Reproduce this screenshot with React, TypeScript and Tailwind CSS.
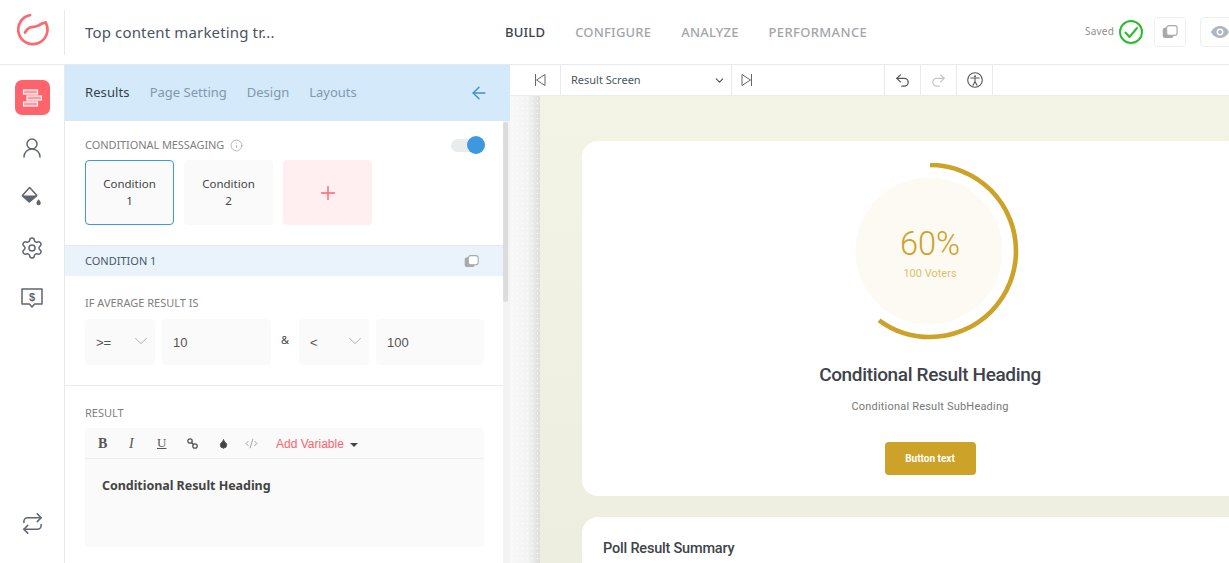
import React from 'react';
import { ChevronDown, Info, Plus, Repeat, Settings, UserRound, Undo2, Redo2, Droplet, CodeXml, ArrowLeft } from 'lucide-react';

const Logo = () => (
  <svg width="36" height="36" viewBox="0 0 36 36" fill="none" stroke="#fb6a70" strokeWidth="2.7" strokeLinecap="round" strokeLinejoin="round">
    <path d="M16 1.2A14.6 14.6 0 1 0 31.7 8.6" />
    <path d="M11 18.5c1.6-2.7 3.2-4.6 5.6-5.2 2.6-.6 4.6-.2 7-1.4 2.8-1.4 4.6-3.2 8.1-3.3" />
  </svg>
);

const ResultsIcon = () => (
  <svg width="20" height="20" viewBox="0 0 20 20" stroke="#fff" strokeWidth="1.2" fill="#ff9a9f">
    <rect x="1.5" y="2" width="14" height="4" />
    <rect x="5" y="8" width="14.5" height="4" />
    <rect x="1.5" y="14" width="14" height="4" />
  </svg>
);

const BucketIcon = () => (
  <svg width="22" height="22" viewBox="0 0 22 22" fill="none" stroke="#5f6670" strokeWidth="1.5" strokeLinejoin="round">
    <path d="M8.6 1.6 1.4 9.4l6.8 6.4 7.6-6.6z" />
    <path d="M2 10.2h13.2l-7 5.6z" fill="#5f6670" />
    <path d="M17.6 13.2c1.2 1.6 2.2 2.6 2.2 3.9a2.2 2.2 0 0 1-4.4 0c0-1.3 1-2.3 2.2-3.9z" fill="#5f6670" stroke="none" />
  </svg>
);

const PriceIcon = () => (
  <svg width="22" height="22" viewBox="0 0 22 22" fill="none" stroke="#5f6670" strokeWidth="1.5" strokeLinejoin="round">
    <path d="M1 2h20v15h-7.4L11 20l-2.6-3H1z" />
    <text x="11" y="14" textAnchor="middle" fontSize="11" fontWeight="700" fill="#5f6670" stroke="none" fontFamily="Liberation Sans, sans-serif">$</text>
  </svg>
);

const CopyIcon = ({ size = 16 }: { size?: number }) => (
  <svg width={size} height={size * 0.85} viewBox="0 0 16 14" fill="none">
    <rect x="0.5" y="2.5" width="11" height="11" rx="3" fill="#a9a9a9" />
    <rect x="4.5" y="0.7" width="10.8" height="10" rx="2.5" fill="#fff" stroke="#a9a9a9" strokeWidth="1.2" />
  </svg>
);

const SkipIcon = ({ flip }: { flip?: boolean }) => (
  <svg width="12" height="14" viewBox="0 0 12 14" fill="none" stroke="#666" strokeWidth="1" className={flip ? 'rotate-180' : ''}>
    <path d="M1.5 1v12M11 1.5v11L2.5 7z" />
  </svg>
);

const PersonCircle = () => (
  <svg width="16" height="16" viewBox="0 0 16 16" fill="none" stroke="#555" strokeWidth="1.1" strokeLinecap="round">
    <circle cx="8" cy="8" r="7.3" />
    <circle cx="8" cy="4.2" r="1" fill="#555" stroke="none" />
    <path d="M3.8 6h8.4M8 6v3.6M8 9.6l-2 3.6M8 9.6l2 3.6" />
  </svg>
);

const ChainIcon = () => (
  <svg width="11" height="11" viewBox="0 0 11 11" fill="none" stroke="#555" strokeWidth="1.3">
    <circle cx="3" cy="3" r="2.2" />
    <circle cx="8" cy="8" r="2.2" />
    <path d="M4 4l3 3" />
  </svg>
);

const SavedCheck = () => (
  <svg width="24" height="24" viewBox="0 0 24 24" fill="none" stroke="#2dbb2d" strokeLinecap="round" strokeLinejoin="round">
    <circle cx="12" cy="12" r="11" strokeWidth="2" />
    <path d="M6.5 12.5l4 4.5 7.5-9" strokeWidth="2" />
  </svg>
);

const EyeIcon = () => (
  <svg width="18" height="12" viewBox="0 0 18 12">
    <path d="M9 0C5 0 1.8 2.5 0 6c1.8 3.5 5 6 9 6s7.2-2.5 9-6c-1.8-3.5-5-6-9-6z" fill="#aeb7c0" />
    <circle cx="9" cy="6" r="3.4" fill="#fff" />
    <circle cx="9" cy="6" r="2" fill="#aeb7c0" />
  </svg>
);

const Field = ({ w, value, select }: { w: string; value: string; select?: boolean }) => (
  <div className={`${w} shrink-0 h-[46px] rounded bg-[#fafafa] flex items-center justify-between px-[11px] text-[13px] text-[#555] font-['Liberation_Sans',sans-serif]`}>
    <span className="mt-[1px]">{value}</span>
    {select && <ChevronDown size={22} strokeWidth={1} className="text-[#aaa] -mt-[3px] -mr-[8px]" />}
  </div>
);

const App: React.FC = () => {
  return (
    <div className="h-screen w-full overflow-hidden flex flex-col bg-white font-['Noto_Sans',sans-serif] text-[#444]">
      {/* top bar */}
      <header className="h-[65px] shrink-0 flex items-center border-b border-[#e6e9ee] relative">
        <div className="w-[65px] h-[45px] shrink-0 flex items-center border-r border-[#e6e9ee] pl-[14px]">
          <Logo />
        </div>
        <div className="w-[440px] pl-5 text-[15px] tracking-[0.15px] text-[#4b5560]">Top content marketing tr...</div>
        <nav className="flex gap-[30px] mt-[1px] text-[13px] font-medium tracking-[0.2px] text-[#a3a6a8]">
          <span className="text-[#39424e]">BUILD</span>
          <span>CONFIGURE</span>
          <span>ANALYZE</span>
          <span className="tracking-[0.35px]">PERFORMANCE</span>
        </nav>
        <div className="ml-auto flex items-center shrink-0 -mr-[29px]">
          <span className="text-[10px] text-[#8e8e8e] tracking-[0.2px] mr-[5px] -mt-[2px]">Saved</span>
          <SavedCheck />
          <div className="ml-[11px] w-[32px] h-[30px] border border-[#eceef1] rounded flex items-center justify-center">
            <CopyIcon />
          </div>
          <div className="ml-[14px] w-[58px] h-[30px] border border-[#eceef1] rounded flex items-center pl-[10px]">
            <EyeIcon />
          </div>
        </div>
      </header>

      <div className="flex-1 flex min-h-0">
        {/* icon rail */}
        <aside className="w-[65px] shrink-0 border-r border-[#e6e9ee] flex flex-col items-center pt-[15px] pb-[28px]">
          <div className="w-[35px] h-[35px] rounded-[7px] bg-[#ff636b] flex items-center justify-center">
            <ResultsIcon />
          </div>
          <UserRound size={24} strokeWidth={1.5} className="mt-[21px] text-[#5f6670]" />
          <div className="mt-[26px] h-[22px]"><BucketIcon /></div>
          <Settings size={24} strokeWidth={1.5} className="mt-[28px] text-[#5f6670]" />
          <div className="mt-[27px] h-[22px]"><PriceIcon /></div>
          <Repeat size={23} strokeWidth={1.6} className="mt-auto text-[#5f6670]" />
        </aside>

        {/* settings panel */}
        <section className="w-[445px] shrink-0 flex flex-col min-h-0">
          <div className="h-[56px] shrink-0 bg-[#d4e9f9] flex items-center pl-5 pr-[21px] gap-5 text-[13px] text-[#8199ad]">
            <span className="text-[#36424f] tracking-[0.1px]">Results</span>
            <span>Page Setting</span>
            <span>Design</span>
            <span>Layouts</span>
            <ArrowLeft size={20} strokeWidth={1.7} className="ml-auto text-[#3b8fdb]" />
          </div>
          <div className="flex-1 flex min-h-0">
            <div className="w-[438px] shrink-0">
              <div className="px-5 pt-4 h-[124px]">
                <div className="flex items-center h-4 text-[11px] tracking-[-0.08px] text-[#808080]">
                  <span>CONDITIONAL MESSAGING</span>
                  <Info size={13} strokeWidth={1} className="ml-[6px]" />
                  <div className="ml-auto w-[33px] h-[13px] rounded-full bg-[#e9ecef] relative mr-[-1px]">
                    <span className="absolute right-[-1px] top-[-3px] w-[18px] h-[18px] rounded-full bg-[#3d98e0]" />
                  </div>
                </div>
                <div className="flex gap-[10px] mt-[7px] text-[11.5px] leading-[17px] text-center">
                  <div className="w-[89px] h-[65px] rounded border border-[#3d98e0] bg-[#fafafa] flex items-center justify-center pb-[2px]"><span>Condition<br />1</span></div>
                  <div className="w-[89px] h-[65px] rounded bg-[#fafafa] flex items-center justify-center pb-[2px]"><span>Condition<br />2</span></div>
                  <div className="w-[89px] h-[65px] rounded bg-[#ffeff0] flex items-center justify-center">
                    <Plus size={22} strokeWidth={1.5} className="text-[#ff636b]" />
                  </div>
                </div>
              </div>
              <div className="h-[31px] bg-[#eaf3fb] border-t border-[#e3e9ee] flex items-center pl-5 pr-[24px] justify-between text-[11px] text-[#45596b]">
                <span>CONDITION 1</span>
                <CopyIcon size={15} />
              </div>
              <div className="h-[110px] border-b border-[#e8ebef] px-5 pt-[19px]">
                <div className="text-[11px] leading-[15px] text-[#808080]">IF AVERAGE RESULT IS</div>
                <div className="flex items-center gap-[7px] mt-[9px]">
                  <Field w="w-[70px]" value=">=" select />
                  <Field w="w-[109px]" value="10" />
                  <span className="w-[14px] shrink-0 text-center text-[11px] -mt-1">&amp;</span>
                  <Field w="w-[70px]" value="<" select />
                  <Field w="w-[108px]" value="100" />
                </div>
              </div>
              <div className="px-5 pt-[19px]">
                <div className="text-[11px] leading-[15px] text-[#808080]">RESULT</div>
                <div className="mt-[8px] w-[399px] bg-[#fafafa] rounded-sm">
                  <div className="h-[31px] flex items-center border-b border-[#ebedf0] pl-[13px] text-[#555]">
                    <span className="w-[30px] font-['Liberation_Serif',serif] font-bold text-[14px]">B</span>
                    <span className="w-[29px] font-['Liberation_Serif',serif] italic text-[14px] pl-[1px]">I</span>
                    <span className="w-[30px] font-['Liberation_Serif',serif] underline text-[13px]">U</span>
                    <span className="w-[31px]"><ChainIcon /></span>
                    <span className="w-[27px]"><Droplet size={11} fill="#444" /></span>
                    <span className="w-[31px]"><CodeXml size={13} strokeWidth={1.2} className="text-[#777]" /></span>
                    <span className="mt-[1px] font-['Liberation_Sans',sans-serif] text-[12px] text-[#ff636b]">Add Variable</span>
                    <span className="ml-[6px] mt-[3px] border-x-[4px] border-t-[4px] border-x-transparent border-t-[#444]" />
                  </div>
                  <div className="h-[88px] pl-[17px] pt-[18px] text-[12.5px] tracking-[-0.05px] leading-[18px] font-bold text-[#444]">Conditional Result Heading</div>
                </div>
              </div>
            </div>
            {/* panel scrollbar */}
            <div className="w-[7px] bg-[#f3f3f3] pt-[1px]">
              <div className="w-[5px] h-[180px] bg-[#dcdcdc] rounded-sm" />
            </div>
          </div>
        </section>

        {/* preview */}
        <main className="flex-1 min-w-0 flex flex-col">
          <div className="h-[31px] shrink-0 border-b border-[#e8ebef] flex items-center text-[11px] text-[#4b5560]">
            <div className="w-[51px] h-full border-r border-[#e8ebef] flex items-center justify-end pr-[14px]"><SkipIcon /></div>
            <div className="w-[171px] h-full border-r border-[#e8ebef] flex items-center justify-between pl-[10px] pr-[5px]">
              <span>Result Screen</span>
              <ChevronDown size={13} />
            </div>
            <div className="w-[153px] h-full border-r border-[#e8ebef] flex items-center pl-[9px]"><SkipIcon flip /></div>
            <div className="w-[36px] h-full border-r border-[#e8ebef] flex items-center justify-center"><Undo2 size={17} strokeWidth={1.8} className="text-[#555]" /></div>
            <div className="w-[36px] h-full border-r border-[#e8ebef] flex items-center justify-center"><Redo2 size={17} strokeWidth={1.8} className="text-[#c4c4c4]" /></div>
            <div className="w-[36px] h-full border-r border-[#e8ebef] flex items-center justify-center"><PersonCircle /></div>
          </div>
          <div className="flex-1 min-h-0 flex overflow-hidden">
            <div className="w-[30px] shrink-0 bg-[radial-gradient(#ffffff_0.7px,transparent_0.8px),linear-gradient(to_right,#f8f8f8,#f3f3f3_60%,#dedede)] [background-size:5px_5px,100%_100%]" />
            <div className="flex-1 bg-gradient-to-b from-[#f3f3e6] to-[#eeeee0] pl-[42px] pt-[45px] overflow-hidden">
              <div className="w-[696px] h-[355px] rounded-2xl bg-white flex flex-col items-center font-['Roboto',sans-serif]">
                <div className="relative w-[178px] h-[176px] mt-[22px] flex items-center justify-center">
                  <svg width="178" height="178" viewBox="0 0 178 178" className="absolute top-0 left-0">
                    <circle cx="88" cy="88" r="73.5" fill="#fcfaf3" />
                    <circle cx="89" cy="88" r="86" fill="none" stroke="#cda229" strokeWidth="4.6" strokeDasharray="324.2 216.2" transform="rotate(-90 89 88)" />
                  </svg>
                  <div className="relative flex flex-col items-center mt-[5px]">
                    <span className="text-[32.5px] leading-[36px] font-light text-[#cda229]">60%</span>
                    <span className="text-[11px] leading-[14px] mt-[5px] text-[#e0bf6a]">100 Voters</span>
                  </div>
                </div>
                <div className="mt-[24px] text-[19px] tracking-[-0.35px] leading-[24px] font-medium text-[#3e434a]">Conditional Result Heading</div>
                <div className="mt-[13px] text-[11px] leading-[14px] tracking-[0.2px] text-[#777]">Conditional Result SubHeading</div>
                <button className="mt-[28px] w-[91px] h-[33px] rounded bg-[#cda229] text-white text-[10px] font-bold">Button text</button>
              </div>
              <div className="w-[696px] h-[80px] mt-[21px] rounded-2xl bg-white px-[21px] pt-[23px] font-['Roboto',sans-serif] text-[14.5px] tracking-[-0.2px] leading-[18px] font-medium text-[#3e434a]">
                Poll Result Summary
              </div>
            </div>
          </div>
        </main>
      </div>
    </div>
  );
};

export default App;
